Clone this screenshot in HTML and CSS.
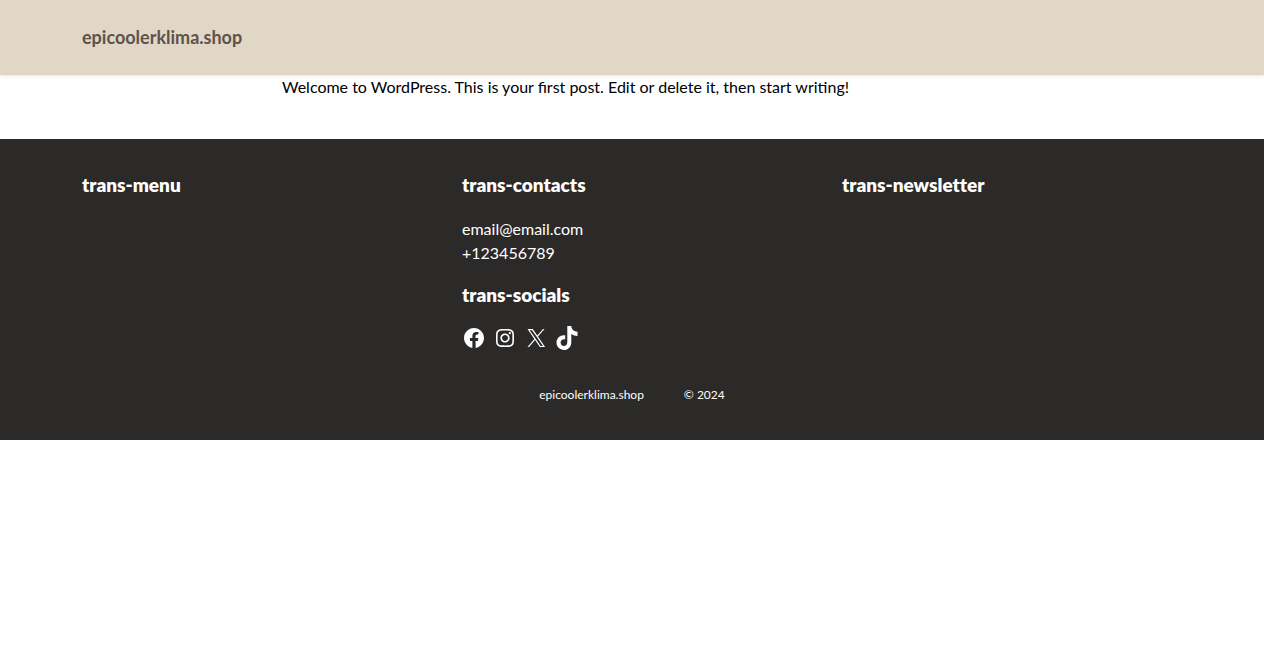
FILE: index.html
```html
<!DOCTYPE html>
<html lang="en">
<head>
<meta charset="utf-8">
<meta name="viewport" content="width=device-width, initial-scale=1">
<title>epicoolerklima.shop</title>
<link rel="stylesheet" href="styles.css">
</head>
<body>
<header class="site-header">
  <div class="container"><a class="brand" href="#">epicoolerklima.shop</a></div>
</header>
<main class="post">
  <p>Welcome to WordPress. This is your first post. Edit or delete it, then start writing!</p>
</main>
<footer class="site-footer">
  <div class="container columns">
    <section><h2 class="title">trans-menu</h2></section>
    <section>
      <h2 class="title">trans-contacts</h2>
      <address class="contacts">
        <a href="mailto:email@email.com">email@email.com</a>
        <a href="tel:+123456789">+123456789</a>
      </address>
      <h2 class="title">trans-socials</h2>
      <nav class="socials" aria-label="Social networks">
        <a href="#" aria-label="Facebook"><svg viewBox="0 0 24 24"><path d="M12 2C6.5 2 2 6.5 2 12c0 5 3.7 9.1 8.4 9.9v-7H7.9V12h2.5V9.8c0-2.5 1.5-3.9 3.8-3.9 1.1 0 2.2.2 2.2.2v2.5h-1.3c-1.2 0-1.6.8-1.6 1.6V12h2.8l-.4 2.9h-2.3v7C18.3 21.1 22 17 22 12c0-5.5-4.5-10-10-10z"/></svg></a>
        <a href="#" aria-label="Instagram"><svg viewBox="0 0 24 24"><path d="M12,4.622c2.403,0,2.688,0.009,3.637,0.052c0.877,0.04,1.354,0.187,1.671,0.31c0.42,0.163,0.72,0.358,1.035,0.673c0.315,0.315,0.51,0.615,0.673,1.035c0.123,0.317,0.27,0.794,0.31,1.671c0.043,0.949,0.052,1.234,0.052,3.637s-0.009,2.688-0.052,3.637c-0.04,0.877-0.187,1.354-0.31,1.671c-0.163,0.42-0.358,0.72-0.673,1.035c-0.315,0.315-0.615,0.51-1.035,0.673c-0.317,0.123-0.794,0.27-1.671,0.31c-0.949,0.043-1.233,0.052-3.637,0.052s-2.688-0.009-3.637-0.052c-0.877-0.04-1.354-0.187-1.671-0.31c-0.42-0.163-0.72-0.358-1.035-0.673c-0.315-0.315-0.51-0.615-0.673-1.035c-0.123-0.317-0.27-0.794-0.31-1.671C4.631,14.688,4.622,14.403,4.622,12s0.009-2.688,0.052-3.637c0.04-0.877,0.187-1.354,0.31-1.671c0.163-0.42,0.358-0.72,0.673-1.035c0.315-0.315,0.615-0.51,1.035-0.673c0.317-0.123,0.794-0.27,1.671-0.31C9.312,4.631,9.597,4.622,12,4.622 M12,3C9.556,3,9.249,3.01,8.289,3.054C7.331,3.098,6.677,3.25,6.105,3.472C5.513,3.702,5.011,4.01,4.511,4.511c-0.5,0.5-0.808,1.002-1.038,1.594C3.25,6.677,3.098,7.331,3.054,8.289C3.01,9.249,3,9.556,3,12c0,2.444,0.01,2.751,0.054,3.711c0.044,0.958,0.196,1.612,0.418,2.185c0.23,0.592,0.538,1.094,1.038,1.594c0.5,0.5,1.002,0.808,1.594,1.038c0.572,0.222,1.227,0.375,2.185,0.418C9.249,20.99,9.556,21,12,21s2.751-0.01,3.711-0.054c0.958-0.044,1.612-0.196,2.185-0.418c0.592-0.23,1.094-0.538,1.594-1.038c0.5-0.5,0.808-1.002,1.038-1.594c0.222-0.572,0.375-1.227,0.418-2.185C20.99,14.751,21,14.444,21,12s-0.01-2.751-0.054-3.711c-0.044-0.958-0.196-1.612-0.418-2.185c-0.23-0.592-0.538-1.094-1.038-1.594c-0.5-0.5-1.002-0.808-1.594-1.038c-0.572-0.222-1.227-0.375-2.185-0.418C14.751,3.01,14.444,3,12,3L12,3z M12,7.378c-2.552,0-4.622,2.069-4.622,4.622S9.448,16.622,12,16.622s4.622-2.069,4.622-4.622S14.552,7.378,12,7.378z M12,15c-1.657,0-3-1.343-3-3s1.343-3,3-3s3,1.343,3,3S13.657,15,12,15z M16.804,6.116c-0.596,0-1.08,0.484-1.08,1.08s0.484,1.08,1.08,1.08c0.596,0,1.08-0.484,1.08-1.08S17.401,6.116,16.804,6.116z"/></svg></a>
        <a href="#" aria-label="X"><svg viewBox="0 0 24 24"><path d="M13.982 10.622 20.54 3h-1.554l-5.693 6.618L8.745 3H3.5l6.876 10.007L3.5 21h1.554l6.012-6.989L15.868 21h5.245l-7.131-10.378Zm-2.128 2.474-.697-.997-5.543-7.93H8l4.474 6.4.697.996 5.815 8.318h-2.387l-4.745-6.787Z"/></svg></a>
        <a href="#" aria-label="TikTok"><svg viewBox="0 0 24 24"><path d="M12.3 0h4c.2 3.2 2.600 5.500 6.200 5.800v4.100c-2.300 0-4.400-.7-6.200-2v8.300c0 4.600-3.200 7.800-7.300 7.800s-7.500-3.200-7.500-7.400c0-4.600 3.900-8 8.700-7.300v4.200c-2.500-.7-4.600.8-4.600 3.100 0 1.900 1.500 3.400 3.300 3.400 2 0 3.400-1.400 3.400-3.800z"/></svg></a>
      </nav>
    </section>
    <section><h2 class="title">trans-newsletter</h2></section>
  </div>
  <div class="legal"><a href="#">epicoolerklima.shop</a><span>© 2024</span></div>
</footer>
</body>
</html>
```
FILE: styles.css
```css
body {
  margin: 0;
  background: #fff;
  color: #000;
  font: 16px/24px Lato, sans-serif;
}

a {
  color: inherit;
  text-decoration: none;
}

.container {
  max-width: 1100px;
  margin: 0 auto;
}

.site-header {
  padding: 25px 20px;
  background: #e0d7c6;
  box-shadow: 0 0 5px rgba(0, 0, 0, 0.15);
}

.brand {
  display: inline-block;
  vertical-align: top;
  color: #5f524b;
  font-size: 18px;
  line-height: 25px;
  font-weight: 700;
}

.post {
  max-width: 700px;
  margin: 0 auto;
  padding-bottom: 40px;
}

.post p {
  margin: 0;
}

.site-footer {
  padding: 32px 20px;
  background: #2c2a29;
  color: #fff;
}

.columns {
  display: grid;
  grid-template-columns: repeat(3, 1fr);
  gap: 40px;
}

.title {
  margin: 0;
  font: 800 19px/28px Lato, sans-serif;
  font-variant-ligatures: none;
}

.contacts {
  display: flex;
  flex-direction: column;
  align-items: flex-start;
  margin: 18px 0 16px;
  font-style: normal;
}

.socials {
  display: flex;
  gap: 7px;
  margin-top: 17px;
}

.socials a,
.socials svg {
  display: block;
  width: 24px;
  height: 24px;
  fill: #fff;
}

.legal {
  display: flex;
  justify-content: center;
  gap: 40px;
  padding: 33px 0 1px;
  font-size: 12px;
}
```
